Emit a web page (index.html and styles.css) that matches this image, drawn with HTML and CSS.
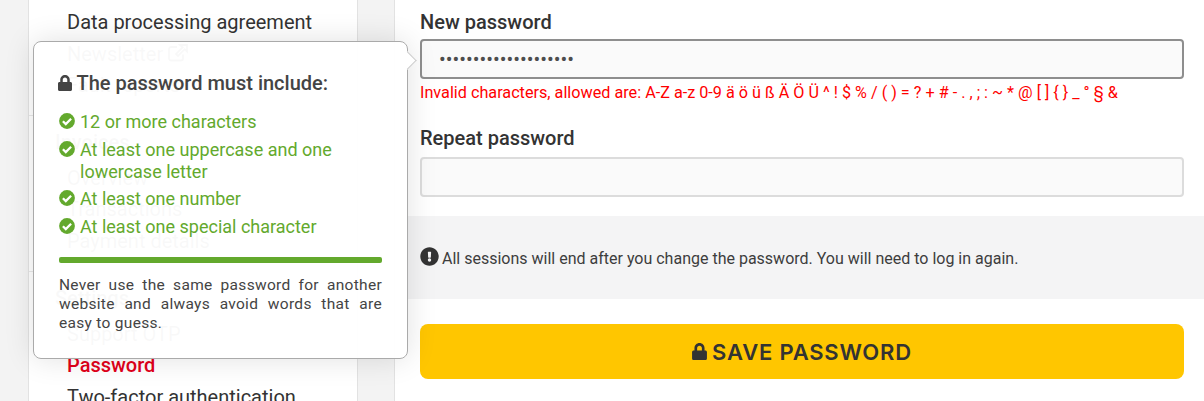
FILE: index.html
```html
<!DOCTYPE html>
<html lang="en">
<head>
<meta charset="utf-8">
<title>Password</title>
<link rel="stylesheet" href="styles.css">
</head>
<body>
<div class="page">
  <aside class="sidebar">
    <nav class="group group-top">
      <a class="item">Data processing agreement</a>
      <a class="item">Newsletter <svg class="ext" viewBox="0 0 20 18"><path d="M15 10.5v4a2 2 0 0 1-2 2H3a2 2 0 0 1-2-2V5a2 2 0 0 1 2-2h6M12 1h7v6.500l-2.300-2.300L10 12 8 10l6.700-6.700z" fill="none" stroke="currentColor" stroke-width="1.800"/></svg></a>
      <a class="item">Fault reports</a>
    </nav>
    <nav class="group">
      <h3 class="heading">Invoices</h3>
      <a class="item">Overview</a>
      <a class="item">Transactions</a>
      <a class="item">Payment details</a>
    </nav>
    <nav class="group">
      <h3 class="heading">Settings</h3>
      <a class="item">Support OTP</a>
      <a class="item active">Password</a>
      <a class="item">Two-factor authentication</a>
    </nav>
  </aside>
  <main class="main">
    <div class="field">
      <label class="label">New password</label>
      <div class="input input-active">••••••••••••••••••••</div>
      <p class="error">Invalid characters, allowed are: A-Z a-z 0-9 ä ö ü ß Ä Ö Ü ^ ! $ % / ( ) = ? + # - . , ; : ~ * @ [ ] { } _ ° § &amp;</p>
    </div>
    <div class="field field-repeat">
      <label class="label label-repeat">Repeat password</label>
      <div class="input"></div>
    </div>
    <div class="notice">
      <svg class="notice-icon" viewBox="0 0 512 512"><path fill="#333" d="M504 256c0 137-111 248-248 248S8 393 8 256 119 8 256 8s248 111 248 248zm-248 50a46 46 0 1 0 0 92 46 46 0 0 0 0-92zm-43.700-165.400 7.400 136c.3 6.400 5.600 11.400 12 11.400h48.600c6.400 0 11.700-5 12-11.400l7.400-136c.4-6.900-5.100-12.600-12-12.600h-63.400c-6.900 0-12.400 5.700-12 12.600z"/></svg>
      <span class="notice-text">All sessions will end after you change the password. You will need to log in again.</span>
    </div>
    <button class="save" type="button">
      <svg class="save-icon" viewBox="0 0 448 512"><path fill="currentColor" d="M400 224h-24v-72C376 68 308 0 224 0S72 68 72 152v72H48c-26.500 0-48 21.500-48 48v192c0 26.500 21.500 48 48 48h352c26.500 0 48-21.500 48-48V272c0-26.500-21.500-48-48-48zm-104 0H152v-72c0-39.700 32.300-72 72-72s72 32.300 72 72v72z"/></svg>
      SAVE PASSWORD
    </button>
  </main>
</div>
<div class="popover">
  <h4 class="pop-title"><svg class="pop-lock" viewBox="0 0 448 512"><path fill="currentColor" d="M400 224h-24v-72C376 68 308 0 224 0S72 68 72 152v72H48c-26.500 0-48 21.500-48 48v192c0 26.500 21.500 48 48 48h352c26.500 0 48-21.500 48-48V272c0-26.500-21.500-48-48-48zm-104 0H152v-72c0-39.700 32.300-72 72-72s72 32.300 72 72v72z"/></svg> The password must include:</h4>
  <ul class="rules">
    <li class="rule"><svg class="check" viewBox="0 0 16 16"><circle cx="8" cy="8" r="7.900" fill="currentColor"/><path d="M3.900 8.200l2.900 2.900 5.300-5.300" fill="none" stroke="#fff" stroke-width="2.300"/></svg><span>12 or more characters</span></li>
    <li class="rule"><svg class="check" viewBox="0 0 16 16"><circle cx="8" cy="8" r="7.900" fill="currentColor"/><path d="M3.900 8.200l2.900 2.900 5.300-5.300" fill="none" stroke="#fff" stroke-width="2.300"/></svg><span>At least one uppercase and one lowercase letter</span></li>
    <li class="rule"><svg class="check" viewBox="0 0 16 16"><circle cx="8" cy="8" r="7.900" fill="currentColor"/><path d="M3.900 8.200l2.900 2.900 5.300-5.300" fill="none" stroke="#fff" stroke-width="2.300"/></svg><span>At least one number</span></li>
    <li class="rule"><svg class="check" viewBox="0 0 16 16"><circle cx="8" cy="8" r="7.900" fill="currentColor"/><path d="M3.900 8.200l2.900 2.900 5.300-5.300" fill="none" stroke="#fff" stroke-width="2.300"/></svg><span>At least one special character</span></li>
  </ul>
  <div class="meter"></div>
  <p class="pop-note">Never use the same password for another website and always avoid words that are easy to guess.</p>
  <span class="pop-arrow"></span>
</div>
</body>
</html>
```
FILE: styles.css
```css
* { box-sizing: border-box; }
html, body { margin: 0; height: 401px; overflow: hidden; }
body {
  background: #f3f3f3;
  font-family: Roboto, "Liberation Sans", sans-serif;
  color: #333;
  position: relative;
}
.page {
  display: flex;
  height: 401px;
  padding-left: 28px;
  gap: 36px;
  overflow: hidden;
}
.sidebar {
  width: 330px;
  flex: none;
  height: 401px;
  overflow: hidden;
  background: #fff;
  border-left: 1px solid #e2e2e2;
  border-right: 1px solid #e2e2e2;
}
.group { padding: 13px 0 13px 38px; border-bottom: 1px solid #e8e8e8; }
.group-top { padding-top: 7px; }
.group:last-child { border-bottom: 0; }
.item {
  display: block;
  height: 31.6px;
  line-height: 31.6px;
  font-size: 20px;
  white-space: nowrap;
}
.active { color: #e2001a; font-weight: 500; }
.heading {
  margin: 0 0 7px -12px;
  height: 27px;
  line-height: 27px;
  font-size: 20px;
  font-weight: 500;
}
.ext { width: 20px; height: 18px; vertical-align: -1px; }
.main {
  flex: 1;
  background: #fff;
  border-left: 1px solid #e2e2e2;
  padding-top: 9px;
  height: 401px;
}
.field { padding: 0 20px 0 25px; }
.field-repeat { margin-top: 21px; }
.label {
  display: block;
  font-size: 20px;
  line-height: 26px;
  font-weight: 500;
  margin-bottom: 4px;
}
.label-repeat { margin-bottom: 6px; }
.input {
  height: 40px;
  border: 2px solid #dcdcdc;
  border-radius: 4px;
  background: #fafafa;
  padding-left: 17px;
  line-height: 36px;
  font-size: 20px;
}
.input-active { border-color: #8e8e8e; color: #4d4d4d; }
.error {
  margin: 3px 0 0;
  color: #f00;
  font-size: 16.22px;
  line-height: 22px;
  white-space: nowrap;
}
.notice {
  margin-top: 19px;
  height: 83px;
  background: #f4f4f5;
  padding-left: 25px;
  display: flex;
  align-items: center;
  gap: 3px;
  font-size: 16px;
  color: #3d3d3d;
}
.notice-icon { width: 19px; height: 19px; flex: none; margin-bottom: 2px; }
.notice-text { padding-top: 2px; }
.save {
  display: flex;
  align-items: center;
  justify-content: center;
  gap: 5px;
  width: 764px;
  margin: 25px 0 0 25px;
  height: 55px;
  border: 0;
  border-radius: 8px;
  background: #ffc600;
  color: #333;
  font-family: Inter, sans-serif;
  font-size: 22px;
  font-weight: 600;
  letter-spacing: .8px;
  padding: 0;
}
.save-icon { width: 15px; height: 17px; }
.popover {
  position: absolute;
  left: 33px;
  top: 41px;
  width: 375px;
  height: 318px;
  background: rgba(255,255,255,.97);
  border: 1px solid #aaa;
  border-radius: 8px;
  padding: 25px 25px 0;
  box-shadow: 0 0 30px rgba(0,0,0,.12);
}
.pop-title {
  margin: 0;
  font-size: 20px;
  line-height: 33px;
  font-weight: 500;
  color: #444;
  white-space: nowrap;
}
.pop-lock { width: 14px; height: 16px; vertical-align: -1px; margin-left: -1px; }
.rules { list-style: none; margin: 11px 0 0; padding: 0; }
.rule {
  display: flex;
  color: #63a92d;
  font-size: 18px;
  line-height: 22px;
  margin-bottom: 5.600px;
  gap: 5px;
}
.check { width: 16px; height: 16px; flex: none; margin-top: 2px; }
.meter { height: 6px; background: #63a92d; border-radius: 2px; margin-top: 19px; }
.pop-note {
  margin: 13px 0 0;
  font-size: 15.5px;
  line-height: 19px;
  letter-spacing: .3px;
  color: #444;
  text-align: justify;
}
.pop-arrow {
  position: absolute;
  top: 12px;
  right: -7px;
  width: 13px;
  height: 13px;
  background: #fff;
  border-top: 1px solid #ccc;
  border-right: 1px solid #ccc;
  transform: rotate(45deg);
}
```
